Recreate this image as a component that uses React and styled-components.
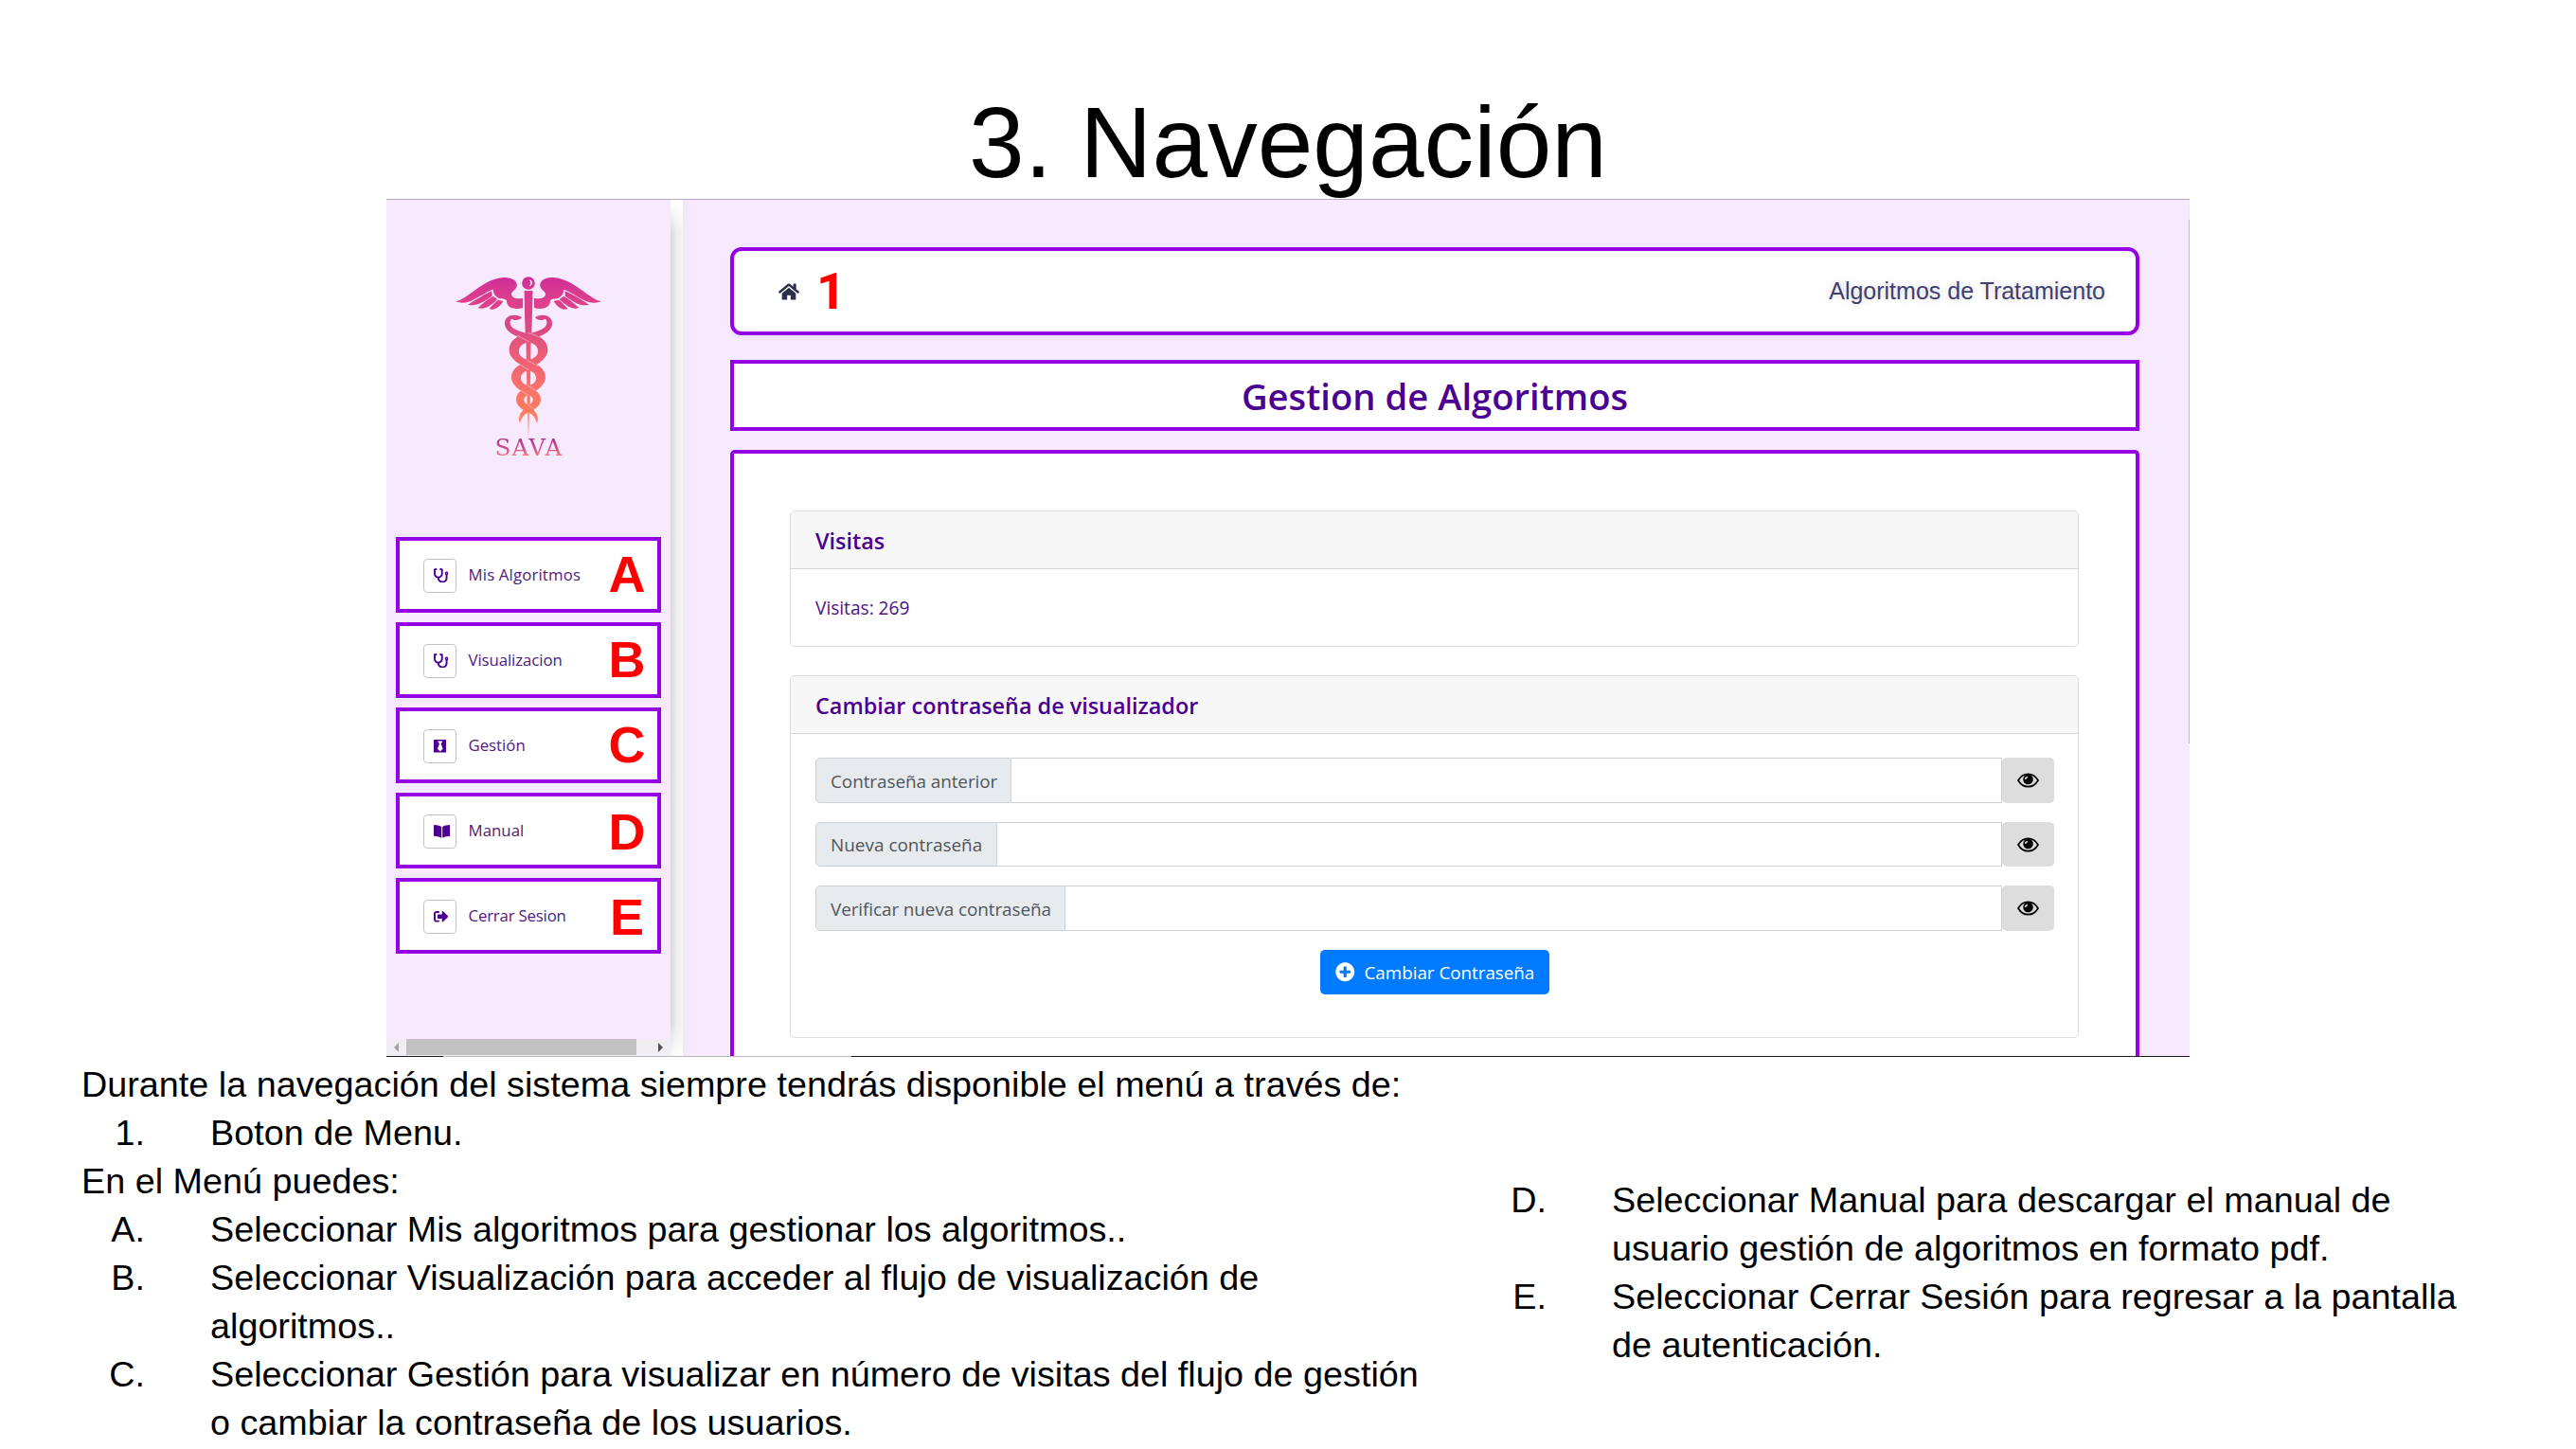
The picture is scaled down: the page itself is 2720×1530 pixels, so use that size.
import React from 'react';
import styled, { createGlobalStyle } from 'styled-components';
import {
  FaStethoscope,
  FaBlackTie,
  FaBookOpen,
  FaSignOutAlt,
  FaHome,
  FaPlusCircle,
} from 'react-icons/fa';

const arial = "'Liberation Sans', Arial, sans-serif";
const segoe = "'Open Sans', 'Noto Sans', sans-serif";
const violet = '#9400e3';
const indigo = '#4b0091';
const lilac = '#f7eafe';

const GlobalStyle = createGlobalStyle`
  *, *::before, *::after { box-sizing: border-box; }
  body { margin: 0; background: #fff; overflow: hidden; }
`;

const Slide = styled.main`
  width: 2720px;
  height: 1530px;
  padding-top: 90px;
  overflow: hidden;
  background: #fff;
  color: #000;
  font-family: ${arial};
`;

const SlideTitle = styled.h1`
  margin: 0;
  height: 120px;
  line-height: 122px;
  font-size: 105.4px;
  font-weight: 400;
  text-align: center;
  white-space: nowrap;
`;

/* ---------- application window ---------- */

const Window = styled.section`
  display: flex;
  flex-direction: column;
  width: 1904px;
  height: 906px;
  margin-left: 408px;
  border-top: 1px solid #b9a6c6;
`;

const WindowBody = styled.div`
  display: flex;
  height: 904px;
`;

const TaskbarEdge = styled.div`
  height: 1px;
  background: linear-gradient(90deg, #1c1c1c 60px, #b8b8b8 60px 491px, #1a1c1c 491px);
`;

const Sidebar = styled.aside`
  display: flex;
  flex-direction: column;
  width: 300px;
  background: ${lilac};
`;

const Brand = styled.div`
  display: flex;
  flex-direction: column;
  align-items: center;
  padding-top: 79px;
`;

const BrandName = styled.span`
  height: 24px;
  padding-left: 1px;
  line-height: 24px;
  font-family: 'DejaVu Serif', serif;
  font-size: 24.6px;
  letter-spacing: 1.2px;
  background: linear-gradient(180deg, #a8358f 10%, #d24c85 50%, #f4806c 88%);
  background-clip: text;
  color: transparent;
`;

const Menu = styled.nav`
  display: flex;
  flex-direction: column;
  gap: 10px;
  padding: 0 10px;
  margin-top: 82px;
`;

const MenuItem = styled.a`
  display: flex;
  align-items: center;
  height: 80px;
  padding: 0 12px 0 25px;
  border: 4px solid ${violet};
  background: #fff;
`;

const MenuIcon = styled.span`
  display: flex;
  align-items: center;
  width: 35px;
  height: 36px;
  margin-top: 1px;
  padding-left: 9.5px;
  border: 1px solid #c4c4c4;
  border-radius: 4px;
  color: ${indigo};

  svg {
    flex: none;
    width: ${(p) => p.$w}px;
    height: 15.5px;
  }
`;

const MenuLabel = styled.span`
  flex: 1;
  padding: 0 0 2px 12.5px;
  font-family: ${segoe};
  font-size: 16.8px;
  letter-spacing: ${(p) => p.$track}px;
  color: #4d2080;
  white-space: nowrap;
`;

const Marker = styled.b`
  width: 40px;
  padding-top: ${(p) => p.$drop || 0}px;
  margin-top: -2px;
  line-height: 60px;
  font-size: 54px;
  text-align: center;
  color: #f00;
`;

const SideScroll = styled.div`
  display: flex;
  align-items: center;
  height: 18px;
  margin-top: auto;
  padding: 0 8px 1px;
  background: #f1eef3;
`;

const Thumb = styled.div`
  width: 243px;
  height: 17px;
  margin: 0 auto 0 8px;
  background: #c1c1c1;
`;

const Arrow = styled.svg`
  width: 5px;
  height: 10px;
  fill: ${(p) => p.$tone};
`;

const Gutter = styled.div`
  width: 13px;
  background:
    linear-gradient(180deg, #fff 4px, transparent 34px, transparent 870px, #fffc 904px),
    linear-gradient(90deg, #d9d9d9, #ededed 45%, #f6f5f7);
`;

const Main = styled.div`
  display: flex;
  flex-direction: column;
  flex: 1;
  padding: 50px 52px 0 50px;
  background: linear-gradient(90deg, #f1e6f9, ${lilac} 10px);
`;

const PageScroll = styled.div`
  width: 1px;
  background: linear-gradient(180deg, #efe9f3 21px, #bdbcbe 21px 574px, #f1f1f1 574px);
`;

const Navbar = styled.header`
  display: flex;
  align-items: center;
  height: 93px;
  padding: 0 32px 0 47px;
  border: 4px solid ${violet};
  border-radius: 12px;
  background: #fff;
  box-shadow: 0 2px 5px #0000000d;
`;

const HomeIcon = styled(FaHome)`
  width: 22px;
  height: 20px;
  color: #2b2f4b;
`;

const NavMarker = styled(Marker)`
  width: 30px;
  margin: 0 0 0 18px;
  padding-top: 1px;
  font-family: Roboto, ${arial};
  text-align: left;
`;

const NavTitle = styled.span`
  margin-left: auto;
  font-size: 25px;
  color: #3f3f72;
  text-shadow: 0 0 9px #0000002e;
`;

const PageTitle = styled.h2`
  height: 75px;
  margin: 26px 0 20px;
  padding-top: 1px;
  border: 4px solid ${violet};
  background: #fff;
  line-height: 67px;
  font-family: ${segoe};
  font-size: 38.2px;
  font-weight: 600;
  text-align: center;
  color: ${indigo};
`;

const Content = styled.div`
  display: flex;
  flex-direction: column;
  gap: 30px;
  flex: 1;
  padding: 60px 60px 0 59px;
  border: 4px solid ${violet};
  border-bottom: 0;
  border-radius: 5px 5px 0 0;
  background: #fff;
  font-family: ${segoe};
`;

const Card = styled.section`
  height: ${(p) => p.$height}px;
  border: 1px solid #dedede;
  border-radius: 5px;
  overflow: hidden;
`;

const CardHeader = styled.h3`
  height: 61px;
  margin: 0;
  padding: 1px 0 0 26px;
  border-bottom: 1px solid #d6d6d6;
  background: #f7f7f7;
  line-height: 60px;
  font-size: 23.4px;
  font-weight: 600;
  color: ${indigo};
`;

const VisitCount = styled.p`
  margin: 0;
  padding: 1px 0 0 26px;
  line-height: 81px;
  font-size: 19.1px;
  color: #4a1585;
`;

const Form = styled.form`
  display: flex;
  flex-direction: column;
  align-items: stretch;
  gap: 20px;
  padding: 25px 25px 0 26px;
`;

const InputGroup = styled.div`
  display: flex;
  height: ${(p) => p.$height}px;
`;

const InputLabel = styled.label`
  display: flex;
  align-items: center;
  width: ${(p) => p.$width}px;
  padding: 1px 0 0 15px;
  border: 1px solid #ccd2d6;
  border-radius: 5px 0 0 5px;
  background: #e8ebee;
  font-size: 18.9px;
  letter-spacing: ${(p) => p.$track}px;
  color: #4f565d;
  white-space: nowrap;
`;

const Field = styled.div`
  flex: 1;
  border: 1px solid #ced1d4;
  border-left: 0;
`;

const Reveal = styled.button`
  display: flex;
  align-items: center;
  justify-content: center;
  width: 55px;
  padding: 0;
  border: 0;
  border-radius: 5px;
  background: #ddd;
  color: #000;
`;

const Submit = styled.button`
  display: flex;
  align-items: center;
  align-self: center;
  gap: 10px;
  width: 242px;
  height: 47px;
  padding: 0 0 0 16px;
  border: 0;
  border-radius: 5px;
  background: #007bff;
  font-family: ${segoe};
  font-size: 18.8px;
  color: #fff;
  white-space: nowrap;

  svg {
    width: 20.5px;
    height: 20.5px;
  }
`;

/* ---------- explanatory text ---------- */

const Notes = styled.div`
  display: flex;
  padding: 4px 0 0 86px;
  font-size: 37.75px;
  line-height: 51px;
  white-space: nowrap;
`;

const Column = styled.div`
  width: ${(p) => p.$width}px;
  padding-top: ${(p) => p.$top || 0}px;
`;

const Sentence = styled.p`
  margin: 0;
`;

const Entry = styled.div`
  display: grid;
  grid-template-columns: 67px 1fr;
  column-gap: 69px;
`;

const EntryMark = styled.span`
  text-align: right;
`;

const feathers = [
  'M358 322C330 334 306 350 282 365C308 374 338 352 358 338Z',
  'M362 338C345 348 328 362 314 375C336 384 362 362 376 348Z',
  'M378 350C368 358 357 368 350 378C368 386 386 368 394 354Z',
];

const Half = () => (
  <g>
    <path d="M244 355C284 346 330 284 394 279C424 277 440 291 437 307C434 321 419 322 420 333C423 345 440 349 457 344V375C436 381 404 379 405 352C397 345 391 347 384 346C370 341 363 331 362 317C334 324 296 363 262 359C254 358 247 357 244 355Z" />
    {feathers.map((d) => (
      <path key={d} d={d} />
    ))}
    <path d="M453 406C446 398 428 396 417 400C402 406 398 416 399 428C402 451 430 463 462 474L474 456C446 451 419 441 416 425C415 417 418 412 421 410C430 417 446 415 453 406Z" />
    <path d="M474 686C450 702 438 718 447 742C452 724 460 713 474 706Z" />
  </g>
);

const Caduceus = () => (
  <svg width="156" height="171" viewBox="240 270 468 513">
    <defs>
      <linearGradient id="sunset" gradientUnits="userSpaceOnUse" x1="0" y1="280" x2="0" y2="780">
        <stop offset="0" stopColor="#cf2f96" />
        <stop offset="0.14" stopColor="#dd3f8c" />
        <stop offset="0.3" stopColor="#d94884" />
        <stop offset="0.48" stopColor="#ec5b77" />
        <stop offset="0.68" stopColor="#f9716c" />
        <stop offset="0.84" stopColor="#fd7b5c" />
        <stop offset="1" stopColor="#eea093" />
      </linearGradient>
    </defs>
    <g fill="url(#sunset)">
      <circle cx="474" cy="297" r="20.5" />
      <path d="M460 321H488L484 458H464Z" />
      <path d="M466 458H482L479 690H470Z" />
      <path d="M471 690H477L474.500 782H473.500Z" />
      <Half />
      <g transform="translate(948 0) scale(-1 1)">
        <Half />
      </g>
      <g fillRule="evenodd">
        <path d="M474 453C514 463 535 482 535 508C535 532 514 550 474 570C434 550 413 532 413 508C413 482 434 463 474 453ZM474 483C457 488 444 496 444 513C444 527 456 535 474 541C492 535 504 527 504 513C504 496 492 488 474 483Z" />
        <path d="M474 542C509 556 528 571 528 595C528 617 509 633 474 652C439 633 420 617 420 595C420 571 439 556 474 542ZM474 572C460 577 450 584 450 598C450 611 460 617 474 623C488 617 498 611 498 598C498 584 488 577 474 572Z" />
        <path d="M474 623C500 635 513 648 513 665C513 682 500 694 474 708C448 694 435 682 435 665C435 648 448 635 474 623ZM474 651C465 654 460 659 460 667C460 674 466 679 474 683C482 679 488 674 488 667C488 659 482 654 474 651Z" />
      </g>
    </g>
    <g fill="none" stroke={lilac} strokeWidth="3">
      <path d="M458.500 320V380" />
      <path d="M489.500 320V380" />
    </g>
    <path d="M477 287C488 288 488 302 477 306C484 300 484 293 477 287Z" fill="#fff" stroke="#fff" strokeWidth="1.500" />
    <g fill="none" stroke={lilac} strokeWidth="2" opacity="0.75">
      <path d="M472 454C484 459 497 461 506 468" />
      <path d="M440 464C450 470 464 475 476 483" />
      <path d="M470 542C482 548 494 552 503 560" />
      <path d="M444 552C454 560 464 566 474 571" />
      <path d="M472 622C482 627 490 632 496 638" />
      <path d="M450 636C458 643 466 647 475 652" />
      <path d="M472 683C480 687 486 690 491 695" />
    </g>
  </svg>
);

const Eye = () => (
  <svg width="23" height="16" viewBox="0 0 69 48">
    <path
      d="M3 24C11 10 22 4 34.500 4S58 10 66 24C58 38 47 44 34.500 44S11 38 3 24Z"
      fill="none"
      stroke="#000"
      strokeWidth="5"
    />
    <circle cx="34.500" cy="21" r="16" fill="#000" />
    <path d="M23 21C24 15 27 12 32 11C34 14 32 19 27 20Z" fill="#ddd" />
  </svg>
);

const menuItems = [
  { label: 'Mis Algoritmos', mark: 'A', Icon: FaStethoscope, w: 15.5, track: 0.15 },
  { label: 'Visualizacion', mark: 'B', Icon: FaStethoscope, w: 15.5, track: -0.08 },
  { label: 'Gestión', mark: 'C', Icon: FaBlackTie, w: 13.6, track: 0 },
  { label: 'Manual', mark: 'D', Icon: FaBookOpen, w: 17.4, track: 0.05, drop: 3 },
  { label: 'Cerrar Sesion', mark: 'E', Icon: FaSignOutAlt, w: 15.5, track: -0.18, drop: 3 },
];

const inputs = [
  { label: 'Contraseña anterior', width: 207, height: 48, track: -0.06 },
  { label: 'Nueva contraseña', width: 192, height: 47, track: 0.02 },
  { label: 'Verificar nueva contraseña', width: 264, height: 48, track: -0.08 },
];

const Item = ({ mark, children }) => (
  <Entry>
    <EntryMark>{mark}</EntryMark>
    <span>{children}</span>
  </Entry>
);

export default function App() {
  return (
    <>
      <GlobalStyle />
      <Slide>
        <SlideTitle>3. Navegación</SlideTitle>
        <Window>
          <WindowBody>
            <Sidebar>
              <Brand>
                <Caduceus />
                <BrandName>SAVA</BrandName>
              </Brand>
              <Menu>
                {menuItems.map(({ label, mark, Icon, w, track, drop }) => (
                  <MenuItem key={mark}>
                    <MenuIcon $w={w}>
                      <Icon preserveAspectRatio="xMinYMid meet" />
                    </MenuIcon>
                    <MenuLabel $track={track}>{label}</MenuLabel>
                    <Marker $drop={drop}>{mark}</Marker>
                  </MenuItem>
                ))}
              </Menu>
              <SideScroll>
                <Arrow viewBox="0 0 5 10" $tone="#a3a3a3">
                  <path d="M5 0V10L0 5Z" />
                </Arrow>
                <Thumb />
                <Arrow viewBox="0 0 5 10" $tone="#505050">
                  <path d="M0 0V10L5 5Z" />
                </Arrow>
              </SideScroll>
            </Sidebar>
            <Gutter />
            <Main>
              <Navbar>
                <HomeIcon />
                <NavMarker>1</NavMarker>
                <NavTitle>Algoritmos de Tratamiento</NavTitle>
              </Navbar>
              <PageTitle>Gestion de Algoritmos</PageTitle>
              <Content>
                <Card $height={144}>
                  <CardHeader>Visitas</CardHeader>
                  <VisitCount>Visitas: 269</VisitCount>
                </Card>
                <Card $height={383}>
                  <CardHeader>Cambiar contraseña de visualizador</CardHeader>
                  <Form>
                    {inputs.map(({ label, width, height, track }) => (
                      <InputGroup key={label} $height={height}>
                        <InputLabel $width={width} $track={track}>
                          {label}
                        </InputLabel>
                        <Field />
                        <Reveal type="button">
                          <Eye />
                        </Reveal>
                      </InputGroup>
                    ))}
                    <Submit type="button">
                      <FaPlusCircle />
                      Cambiar Contraseña
                    </Submit>
                  </Form>
                </Card>
              </Content>
            </Main>
            <PageScroll />
          </WindowBody>
          <TaskbarEdge />
        </Window>
        <Notes>
          <Column $width={1480}>
            <Sentence>
              Durante la navegación del sistema siempre tendrás disponible el menú a través de:
            </Sentence>
            <Item mark="1.">Boton de Menu.</Item>
            <Sentence>En el Menú puedes:</Sentence>
            <Item mark="A.">Seleccionar Mis algoritmos para gestionar los algoritmos..</Item>
            <Item mark="B.">
              Seleccionar Visualización para acceder al flujo de visualización de
              <br />
              algoritmos..
            </Item>
            <Item mark="C.">
              Seleccionar Gestión para visualizar en número de visitas del flujo de gestión
              <br />o cambiar la contraseña de los usuarios.
            </Item>
          </Column>
          <Column $width={1060} $top={122}>
            <Item mark="D.">
              Seleccionar Manual para descargar el manual de
              <br />
              usuario gestión de algoritmos en formato pdf.
            </Item>
            <Item mark="E.">
              Seleccionar Cerrar Sesión para regresar a la pantalla
              <br />
              de autenticación.
            </Item>
          </Column>
        </Notes>
      </Slide>
    </>
  );
}
